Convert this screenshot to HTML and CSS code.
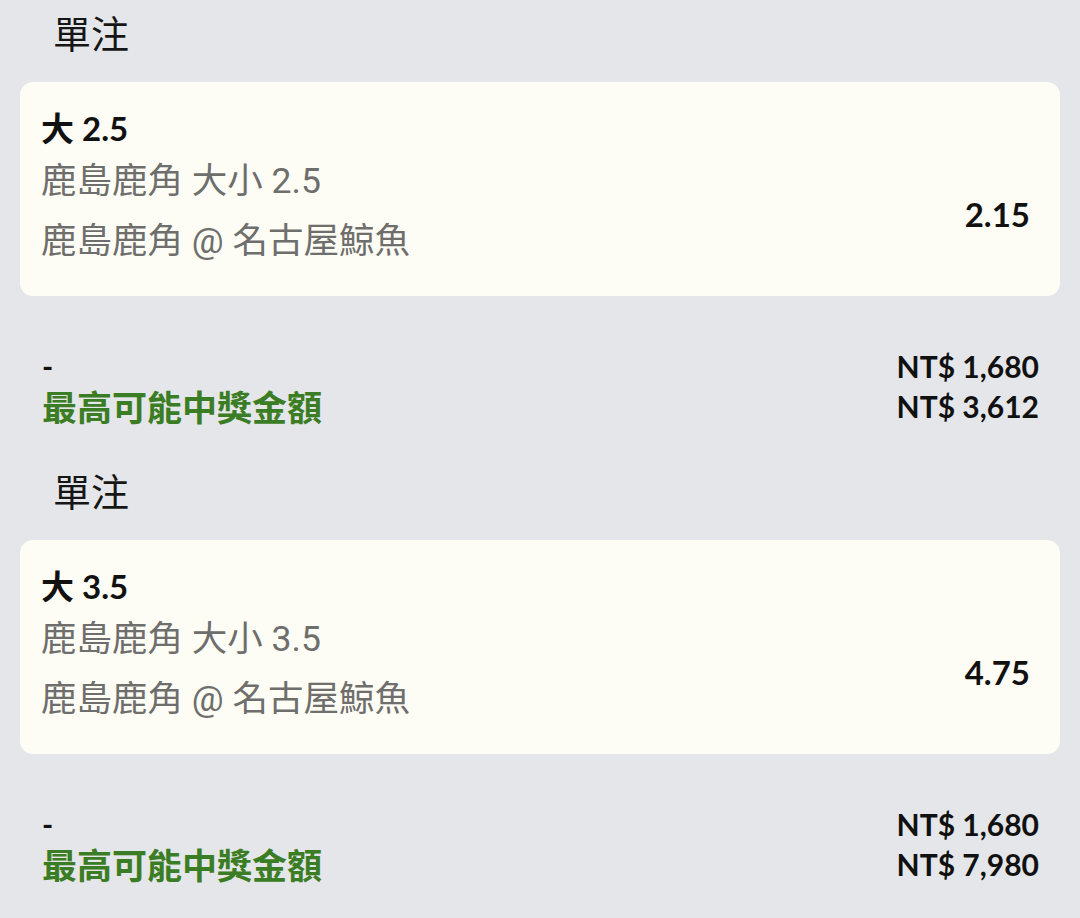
FILE: index.html
```html
<!DOCTYPE html>
<html lang="zh-Hant">
<head>
<meta charset="utf-8">
<title>單注</title>
<link rel="stylesheet" href="styles.css">
</head>
<body>
  <div class="list">
    <section class="bet">
      <h2 class="bet-type">單注</h2>
      <div class="card">
        <div class="sel-title">大 2.5</div>
        <div class="sel-body">
          <div class="details">
            <div class="line">鹿島鹿角 大小 2.5</div>
            <div class="line">鹿島鹿角 @ 名古屋鯨魚</div>
          </div>
          <div class="odds">2.15</div>
        </div>
      </div>
      <div class="summary">
        <div class="labels">
          <div class="dash">-</div>
          <div class="win-label">最高可能中獎金額</div>
        </div>
        <div class="amounts">
          <div class="amount">NT$ 1,680</div>
          <div class="amount">NT$ 3,612</div>
        </div>
      </div>
    </section>
    <section class="bet">
      <h2 class="bet-type">單注</h2>
      <div class="card">
        <div class="sel-title">大 3.5</div>
        <div class="sel-body">
          <div class="details">
            <div class="line">鹿島鹿角 大小 3.5</div>
            <div class="line">鹿島鹿角 @ 名古屋鯨魚</div>
          </div>
          <div class="odds">4.75</div>
        </div>
      </div>
      <div class="summary">
        <div class="labels">
          <div class="dash">-</div>
          <div class="win-label">最高可能中獎金額</div>
        </div>
        <div class="amounts">
          <div class="amount">NT$ 1,680</div>
          <div class="amount">NT$ 7,980</div>
        </div>
      </div>
    </section>
  </div>
</body>
</html>
```

FILE: styles.css
```css
html, body {
  margin: 0;
  padding: 0;
}
body {
  background: #e5e6e9;
  font-family: "Lato", "Noto Sans CJK TC", sans-serif;
  color: #111;
  width: 1080px;
  height: 918px;
  overflow: hidden;
}
.list {
  display: flex;
  flex-direction: column;
}
.bet {
  display: flex;
  flex-direction: column;
  padding-bottom: 32px;
}
.bet-type {
  margin: 0;
  padding-left: 53px;
  font-family: "Noto Sans CJK TC", sans-serif;
  font-weight: 400;
  font-size: 38px;
  line-height: 64px;
  color: #161616;
}
.card {
  margin: 18px 20px 0 20px;
  background: #fefdf5;
  border-radius: 13px;
  padding: 23px 30px 25px 21px;
  display: flex;
  flex-direction: column;
}
.sel-title {
  font-family: "Lato", "Noto Sans CJK TC", sans-serif;
  font-weight: 700;
  font-size: 33px;
  line-height: 46px;
  color: #111;
}
.sel-body {
  display: flex;
  justify-content: space-between;
}
.details {
  display: flex;
  flex-direction: column;
}
.line {
  font-family: "Roboto", "Noto Sans CJK TC", sans-serif;
  font-weight: 400;
  font-size: 35.5px;
  line-height: 60px;
  color: #6e6e6c;
}
.odds {
  align-self: center;
  padding-top: 6px;
  font-weight: 700;
  font-size: 33px;
  color: #111;
}
.summary {
  margin-top: 50px;
  padding: 0 41px 0 42px;
  display: flex;
  justify-content: space-between;
}
.labels, .amounts {
  display: flex;
  flex-direction: column;
}
.amounts {
  align-items: flex-end;
}
.dash, .amount {
  font-weight: 700;
  font-size: 30px;
  line-height: 40px;
  color: #111;
}
.win-label {
  font-family: "Noto Sans CJK TC", sans-serif;
  font-weight: 700;
  font-size: 35px;
  line-height: 40px;
  color: #3b7d24;
}
```
